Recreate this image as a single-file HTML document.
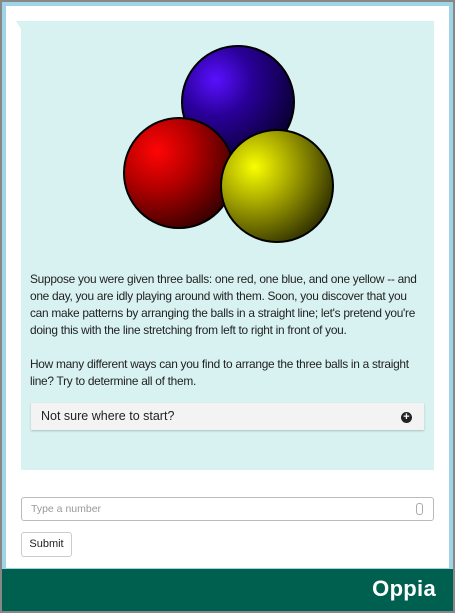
<!DOCTYPE html>
<html><head><style>
html,body{margin:0;padding:0;}
body{width:455px;height:613px;background:#878787;position:relative;overflow:hidden;font-family:"Liberation Sans",sans-serif;}
.frame{position:absolute;left:2px;top:2px;width:451px;height:609px;background:#9fd3e6;}
.white{position:absolute;left:6px;top:6px;width:443px;height:562px;background:#fff;}
.card{position:absolute;left:21px;top:21px;width:413px;height:449px;background:#d8f1f1;}
.notch{position:absolute;left:16px;top:21px;width:0;height:0;border-top:8px solid #d8f1f1;border-left:5px solid transparent;}
.txt{position:absolute;left:30px;top:271px;font-size:11.9px;line-height:17px;color:#222;margin:0;white-space:nowrap;letter-spacing:-0.28px;}
.hint{position:absolute;left:31px;top:403px;width:393px;height:27px;background:#f3f3f3;box-shadow:0 1px 2px rgba(0,0,0,.2);font-size:12.5px;color:#222;}
.hint span{position:absolute;left:10px;top:6px;}
.plus{position:absolute;right:12px;top:9px;width:11px;height:11px;border-radius:50%;background:#222;color:#fff;font-size:11px;line-height:11px;text-align:center;font-weight:bold;}
.inp{position:absolute;left:21px;top:497px;width:411px;height:22px;border:1px solid #bbb;border-radius:3px;background:#fff;}
.inp span{position:absolute;left:9px;top:5px;font-size:10.5px;color:#999;}
.spin{position:absolute;right:10px;top:5px;width:5px;height:10px;border:1px solid #aaa;border-radius:3px;}
.btn{position:absolute;left:21px;top:532px;width:49px;height:23px;border:1px solid #ccc;border-radius:3px;background:#fff;font-size:11px;color:#222;text-align:center;line-height:23px;}
.foot{position:absolute;left:2px;top:569px;width:451px;height:42px;background:#00604f;}
.logo{position:absolute;right:17px;top:7px;color:#fff;font-size:22px;font-weight:bold;letter-spacing:0.3px;}
</style></head><body>
<div class="frame"></div>
<div class="white"></div>
<div class="card"></div>
<div class="notch"></div>
<svg style="position:absolute;left:0;top:0" width="455" height="300">
<defs>
<radialGradient id="b" cx="0.3" cy="0.3" r="0.8"><stop offset="0" stop-color="#5a10ff"/><stop offset="0.4" stop-color="#2a0099"/><stop offset="1" stop-color="#06002a"/></radialGradient>
<radialGradient id="r" cx="0.3" cy="0.3" r="0.8"><stop offset="0" stop-color="#ff0505"/><stop offset="0.4" stop-color="#b80000"/><stop offset="1" stop-color="#300000"/></radialGradient>
<radialGradient id="y" cx="0.3" cy="0.33" r="0.8"><stop offset="0" stop-color="#f8ff00"/><stop offset="0.4" stop-color="#a8a800"/><stop offset="1" stop-color="#262600"/></radialGradient>
</defs>
<circle cx="238" cy="102" r="56" fill="url(#b)" stroke="#000" stroke-width="2"/>
<circle cx="179" cy="173" r="55" fill="url(#r)" stroke="#000" stroke-width="2"/>
<circle cx="277" cy="186" r="56" fill="url(#y)" stroke="#000" stroke-width="2"/>
</svg>
<div class="txt">Suppose you were given three balls: one red, one blue, and one yellow -- and<br>one day, you are idly playing around with them. Soon, you discover that you<br>can make patterns by arranging the balls in a straight line; let's pretend you're<br>doing this with the line stretching from left to right in front of you.<br><br>How many different ways can you find to arrange the three balls in a straight<br>line? Try to determine all of them.</div>
<div class="hint"><span>Not sure where to start?</span><div class="plus">+</div></div>
<div class="inp"><span>Type a number</span><div class="spin"></div></div>
<div class="btn">Submit</div>
<div class="foot"><div class="logo">Oppia</div></div>
</body></html>
